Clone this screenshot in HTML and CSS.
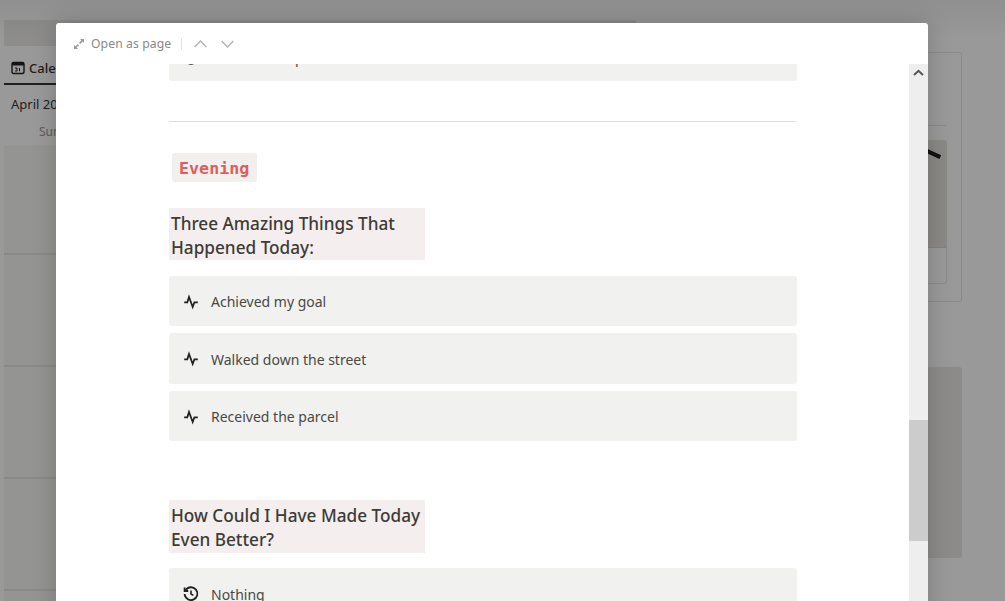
FILE: index.html
```html
<!DOCTYPE html>
<html lang="en">
<head>
  <meta charset="UTF-8">
  <meta name="viewport" content="width=device-width, initial-scale=1.0">
  <title>Daily Journal</title>
  <link rel="stylesheet" href="styles.css">
</head>
<body>
  <!-- page behind the dialog, dimmed by .backdrop -->
  <div class="page">
    <div class="page-left">
      <div class="page-band"></div>
      <div class="tab">
        <svg class="tab-icon" viewBox="0 0 14 14" width="14" height="14"><rect x="1" y="1.5" width="12" height="11" rx="1.5" fill="none" stroke="#222" stroke-width="1.4"/><rect x="1" y="1.5" width="12" height="3" fill="#222"/><path d="M4 7h2v3H4M8.5 7v3.2" fill="none" stroke="#222"/></svg>
        <span>Calendar</span>
      </div>
      <div class="month">April 2022</div>
      <div class="weekday">Sun</div>
      <div class="cal-grid">
        <div class="cal-row r1"></div>
        <div class="cal-row r2"></div>
        <div class="cal-row r3"></div>
        <div class="cal-row r4"></div>
        <div class="cal-row r5"></div>
      </div>
    </div>
    <div class="page-right">
      <div class="side-card">
        <div class="side-rule"></div>
        <div class="side-photo">
          <div class="side-image"></div>
          <div class="side-caption"></div>
        </div>
      </div>
      <div class="side-box"></div>
    </div>
  </div>

  <div class="pen"></div>
  <div class="backdrop"></div>

  <div class="modal">
    <div class="modal-top">
      <svg class="expand" viewBox="0 0 12 12" width="12" height="12"><path d="M7 1h4v4L9.6 3.6 7.2 6 6 4.8l2.4-2.4zM5 11H1V7l1.4 1.4L4.8 6 6 7.2 3.6 9.6z" fill="#9a9a97"/></svg>
      <span class="open-page">Open as page</span>
      <span class="top-sep"></span>
      <svg class="nav" viewBox="0 0 13 8" width="13" height="8"><path d="M.7 7l5.8-6 5.8 6" fill="none" stroke="#b5b4b1" stroke-width="1.5"/></svg>
      <svg class="nav" viewBox="0 0 13 8" width="13" height="8"><path d="M.7 1l5.8 6 5.8-6" fill="none" stroke="#b5b4b1" stroke-width="1.5"/></svg>
    </div>
    <div class="modal-body">
      <div class="doc">
        <div class="item first">
          <svg class="item-icon" viewBox="0 0 16 16" width="16" height="16"><circle cx="8" cy="8" r="6" fill="none" stroke="#222" stroke-width="1.5"/></svg>
          <span>Finished the plan</span>
        </div>
        <hr class="rule">
        <div class="tag-line"><code class="tag">Evening</code></div>
        <h3 class="prompt">Three Amazing Things That Happened Today:</h3>
        <div class="item">
          <svg class="item-icon" viewBox="0 0 16 16" width="16" height="16"><path d="M1.2 8.3h3.1L6 3l3.7 10 1.7-4.7h3.4" fill="none" stroke="#222" stroke-width="1.8"/></svg>
          <span>Achieved my goal</span>
        </div>
        <div class="item">
          <svg class="item-icon" viewBox="0 0 16 16" width="16" height="16"><path d="M1.2 8.3h3.1L6 3l3.7 10 1.7-4.7h3.4" fill="none" stroke="#222" stroke-width="1.8"/></svg>
          <span>Walked down the street</span>
        </div>
        <div class="item">
          <svg class="item-icon" viewBox="0 0 16 16" width="16" height="16"><path d="M1.2 8.3h3.1L6 3l3.7 10 1.7-4.7h3.4" fill="none" stroke="#222" stroke-width="1.8"/></svg>
          <span>Received the parcel</span>
        </div>
        <h3 class="prompt second">How Could I Have Made Today Even Better?</h3>
        <div class="item">
          <svg class="item-icon" viewBox="0 0 16 16" width="16" height="16"><path d="M2.6 4.2A6.4 6.4 0 1 1 1.6 8" fill="none" stroke="#222" stroke-width="1.8"/><path d="M1.6 1.4V5H5.2" fill="none" stroke="#222" stroke-width="1.8"/><path d="M8 4.6V8l2.4 1.4" fill="none" stroke="#222" stroke-width="1.6"/></svg>
          <span>Nothing</span>
        </div>
      </div>
      <div class="scrollbar">
        <svg class="scroll-up" viewBox="0 0 11 7" width="11" height="7"><path d="M1 6l4.5-4.2L10 6" fill="none" stroke="#555" stroke-width="2"/></svg>
        <div class="scroll-thumb"></div>
      </div>
    </div>
  </div>
</body>
</html>
```

FILE: styles.css
```css
* {
  box-sizing: border-box;
}
html, body {
  height: 100%;
}
body {
  margin: 0;
  overflow: hidden;
  background: #fff;
  font-family: "Noto Sans", "Open Sans", sans-serif;
  color: #37352f;
}

/* page behind the dialog */
.page {
  display: flex;
  height: 601px;
  overflow: hidden;
}
.page-left {
  width: 928px;
  padding: 20px 0 0 4px;
}
.page-band {
  width: 632px;
  height: 26px;
  background: #ecebea;
}
.tab {
  display: flex;
  align-items: center;
  gap: 4px;
  width: 120px;
  height: 39px;
  padding: 6px 0 0 7px;
  border-bottom: 2px solid #37352f;
  font-size: 13px;
  font-weight: 500;
}
.month {
  margin: 9px 0 0 7px;
  font-size: 13px;
  line-height: 20px;
}
.weekday {
  margin: 10px 0 0 35px;
  font-size: 12px;
  line-height: 16px;
  color: #9b9a97;
}
.cal-grid {
  margin-top: 5px;
}
.cal-row {
  height: 112px;
  border-bottom: 2px solid #e6e5e3;
  background: #f7f6f3;
}
.cal-row.r1 {
  height: 110px;
}
.page-right {
  flex: 1;
  padding-top: 52px;
}
.side-card {
  width: 34px;
  height: 250px;
  padding-top: 72px;
  border: 1px solid #e6e5e3;
  border-left: none;
  border-radius: 0 3px 3px 0;
}
.side-rule {
  width: 18px;
  height: 1px;
  background: #e6e5e3;
}
.side-photo {
  width: 19px;
  height: 144px;
  margin-top: 14px;
  border: 1px solid #e6e5e3;
  border-left: none;
  border-radius: 0 3px 3px 0;
}
.side-image {
  height: 107px;
  background: #e6e4df;
  border-bottom: 1px solid #dcdbd8;
}
.side-box {
  width: 34px;
  height: 191px;
  margin-top: 65px;
  background: #e9e8e5;
  border-radius: 0 3px 3px 0;
}
.pen {
  position: absolute;
  left: 926px;
  top: 152px;
  width: 15px;
  height: 4px;
  background: #111;
  transform: rotate(25deg);
  z-index: 2;
}
.backdrop {
  position: absolute;
  inset: 0;
  background: linear-gradient(rgba(0, 0, 0, 0.44), rgba(0, 0, 0, 0.4) 40px);
  z-index: 1;
}

/* dialog */
.modal {
  position: absolute;
  left: 56px;
  top: 23px;
  width: 872px;
  height: 600px;
  display: flex;
  flex-direction: column;
  background: #fff;
  border-radius: 3px 3px 0 0;
  box-shadow: 0 0 24px rgba(0, 0, 0, 0.2);
  z-index: 3;
}
.modal-top {
  display: flex;
  align-items: center;
  height: 41px;
  flex-shrink: 0;
  padding-left: 17px;
}
.expand {
  margin-right: 6px;
}
.open-page {
  font-size: 12.2px;
  color: #8a8985;
  letter-spacing: 0.1px;
}
.top-sep {
  width: 1px;
  height: 12px;
  margin: 0 12px 0 10px;
  background: #e3e2e0;
}
.nav {
  margin-right: 14px;
}
.modal-body {
  flex: 1;
  display: flex;
  min-height: 0;
}
.doc {
  flex: 1;
  min-width: 0;
  padding: 0 112px 0 113px;
  overflow: hidden;
}
.item {
  display: flex;
  align-items: center;
  gap: 12px;
  height: 50.5px;
  margin-bottom: 7px;
  padding: 2px 0 0 14px;
  background: #f1f1ef;
  border-radius: 3px;
  font-size: 14px;
  color: #4a4945;
}
.item.first {
  margin-top: -34px;
  margin-bottom: 0;
  padding-top: 5px;
}
.item-icon {
  flex-shrink: 0;
}
.rule {
  margin: 40px 1px 0 0;
  border: none;
  border-top: 1px solid #dcdbd9;
}
.tag-line {
  margin: 31px 0 0 3px;
  height: 29px;
}
.tag {
  display: inline-block;
  height: 29px;
  padding: 0 8px 0 7px;
  background: #f1f0ef;
  border-radius: 3px;
  font-family: "DejaVu Sans Mono", "Liberation Mono", monospace;
  font-size: 16.7px;
  font-weight: 700;
  line-height: 30px;
  color: #e25c5c;
}
.prompt {
  width: 256px;
  height: 52px;
  margin: 26px 0 16px;
  padding: 4px 0 0 2px;
  background: #f4eeee;
  font-size: 17.2px;
  font-weight: 500;
  line-height: 24px;
  color: #3d3b37;
}
.prompt.second {
  height: 53px;
  margin-top: 59px;
  margin-bottom: 15px;
}
.scrollbar {
  position: relative;
  width: 19px;
  flex-shrink: 0;
  background: #eeeeee;
}
.scroll-up {
  position: absolute;
  left: 4px;
  top: 5px;
}
.scroll-thumb {
  position: absolute;
  left: 0;
  top: 356px;
  width: 100%;
  height: 121px;
  background: #cccccc;
}
```
